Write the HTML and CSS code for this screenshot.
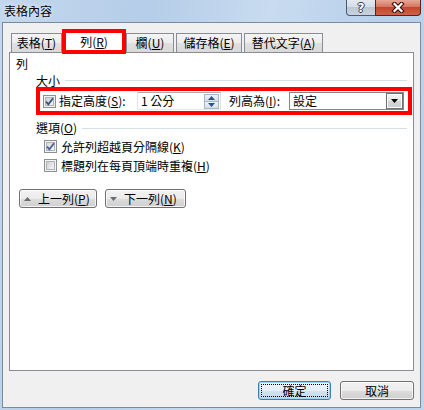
FILE: index.html
```html
<!DOCTYPE html>
<html lang="zh-Hant">
<head>
<meta charset="utf-8">
<title>表格內容</title>
<link rel="stylesheet" href="styles.css">
</head>
<body>
<div class="window">
  <div class="titlebar">
    <span class="title">表格內容</span>
    <div class="caption-btns">
      <span class="cbtn help">?</span>
      <span class="cbtn close"><svg width="14" height="11" viewBox="0 0 14 11"><path d="M3.5 2 L10.5 9 M10.5 2 L3.5 9" stroke="#3d1209" stroke-width="4.4" stroke-linecap="square" fill="none"/><path d="M3.5 2 L10.5 9 M10.5 2 L3.5 9" stroke="#fff" stroke-width="2.2" stroke-linecap="square" fill="none"/></svg></span>
    </div>
  </div>
  <div class="client">
    <div class="tabs">
      <span class="tab t1">表格(<u>T</u>)</span>
      <span class="tab sel">列(<u>R</u>)</span>
      <span class="tab t3">欄(<u>U</u>)</span>
      <span class="tab t4">儲存格(<u>E</u>)</span>
      <span class="tab t5">替代文字(<u>A</u>)</span>
    </div>
    <div class="panel">
      <div class="section-title">列</div>
      <div class="group-head size-head"><span>大小</span><span class="rule"></span></div>
      <div class="size-row">
        <span class="cb checked"><span class="cb-in"><svg width="9" height="9" viewBox="0 0 9 9"><path d="M1 4.6 L3.4 7.4 L8 1.2" stroke="#3b4f86" stroke-width="1.8" fill="none"/></svg></span></span>
        <span class="lbl lbl-height">指定高度(<u>S</u>):</span>
        <span class="spin">
          <span class="spin-text">1 公分</span>
          <span class="spin-btns">
            <span class="spin-b up"><svg width="7" height="4" viewBox="0 0 7 4"><path d="M0 4 L3.5 0 L7 4Z" fill="#2f4f8f"/></svg></span>
            <span class="spin-b down"><svg width="7" height="4" viewBox="0 0 7 4"><path d="M0 0 L3.5 4 L7 0Z" fill="#2f4f8f"/></svg></span>
          </span>
        </span>
        <span class="lbl lbl-rule">列高為(<u>I</u>):</span>
        <span class="combo">
          <span class="combo-text">設定</span>
          <span class="combo-btn"><svg width="7" height="4" viewBox="0 0 7 4"><path d="M0 0 L3.5 4 L7 0Z" fill="#000"/></svg></span>
        </span>
      </div>
      <div class="group-head opt-head"><span>選項(<u>O</u>)</span><span class="rule"></span></div>
      <div class="opt-row">
        <span class="cb checked soft"><span class="cb-in"><svg width="9" height="9" viewBox="0 0 9 9"><path d="M1 4.6 L3.4 7.4 L8 1.2" stroke="#4a5f97" stroke-width="1.8" fill="none"/></svg></span></span>
        <span class="opt-lbl">允許列超越頁分隔線(<u>K</u>)</span>
      </div>
      <div class="opt-row">
        <span class="cb"><span class="cb-in"></span></span>
        <span class="opt-lbl">標題列在每頁頂端時重複(<u>H</u>)</span>
      </div>
      <div class="nav-row">
        <span class="btn nav prev"><svg width="7" height="4" viewBox="0 0 7 4"><path d="M0 4 L3.5 0 L7 4Z" fill="#6b6b6b"/></svg><span>上一列(<u>P</u>)</span></span>
        <span class="btn nav next"><svg width="7" height="4" viewBox="0 0 7 4"><path d="M0 0 L3.5 4 L7 0Z" fill="#6b6b6b"/></svg><span>下一列(<u>N</u>)</span></span>
      </div>
    </div>
    <div class="footer">
      <span class="btn default ok"><span class="focus">確定</span></span>
      <span class="btn cancel">取消</span>
    </div>
  </div>
</div>
</body>
</html>
```
FILE: styles.css
```css
*, *::before, *::after { box-sizing: border-box; }
html, body { margin: 0; padding: 0; }
body {
  width: 424px;
  height: 410px;
  overflow: hidden;
  font-family: "Noto Sans CJK TC", "Noto Sans CJK SC", sans-serif;
  font-size: 12px;
  color: #000;
}
u { text-decoration: underline; text-underline-offset: 1px; }

.window {
  width: 424px;
  height: 410px;
  display: flex;
  flex-direction: column;
  background: linear-gradient(100deg, #c3d7ee 0%, #b5cde8 30%, #c8dbf0 55%, #b7cfe9 80%, #c0d5ec 100%);
}

/* title bar */
.titlebar {
  height: 22px;
  flex: none;
  display: flex;
  justify-content: space-between;
  align-items: flex-start;
}
.title {
  padding-left: 4px;
  line-height: 22px;
  text-shadow: 0 0 5px rgba(255,255,255,0.9);
}
.caption-btns { display: flex; margin-right: 3px; }
.cbtn {
  height: 16px;
  display: flex;
  align-items: center;
  justify-content: center;
  border: 1px solid #4c5b70;
  border-top: none;
}
.cbtn.help {
  width: 29px;
  border-right: none;
  border-bottom-left-radius: 4px;
  background: linear-gradient(#e4eaf2, #d2dae5 50%, #bcc7d6 50%, #c9d3e0);
  color: #fff;
  font-family: "DejaVu Sans", sans-serif;
  font-weight: bold;
  font-size: 12px;
  line-height: 14px;
  text-shadow: 1px 0 #2c3a4d, -1px 0 #2c3a4d, 0 1px #2c3a4d, 0 -1px #2c3a4d;
}
.cbtn.close {
  width: 46px;
  border-color: #5a2319;
  border-bottom-right-radius: 4px;
  background: linear-gradient(#e8a898, #d67660 45%, #c3462e 50%, #cf6248);
}

/* client */
.client {
  flex: none;
  height: 386px;
  margin: 0 3px 0 2px;
  background: #f0f0f0;
  border: 1px solid #7d8a9c;
  display: flex;
  flex-direction: column;
}

/* tabs */
.tabs {
  height: 29px;
  flex: none;
  display: flex;
  align-items: flex-end;
  padding-left: 8px;
  position: relative;
  z-index: 1;
}
.tab {
  height: 19px;
  border: 1px solid #898c95;
  border-bottom: none;
  background: linear-gradient(#f4f4f4, #ececec 50%, #e0e0e0 50%, #d9d9d9);
  display: flex;
  align-items: center;
  justify-content: center;
  line-height: 16px;
  white-space: nowrap;
}
.tab.t1 { width: 51px; }
.tab.sel {
  width: 64px;
  height: 22px;
  margin-bottom: -1px;
  background: #fff;
  position: relative;
  padding-bottom: 2px;
}
.tab.sel::after {
  content: "";
  position: absolute;
  left: -1px;
  top: -3px;
  width: 64px;
  height: 25px;
  border: 4px solid #ff0000;
}
.tab.t3 { width: 48px; }
.tab.t4 { width: 66px; margin-left: 2px; }
.tab.t5 { width: 79px; margin-left: 2px; }

/* panel */
.panel {
  flex: none;
  height: 319px;
  margin: 0 6px;
  background: #fff;
  border: 1px solid #898c95;
  display: flex;
  flex-direction: column;
}
.section-title {
  margin: 3px 0 0 6px;
  height: 16px;
  line-height: 16px;
}
.group-head {
  display: flex;
  align-items: center;
  padding-left: 26px;
  margin-right: 6px;
}
.group-head .rule {
  flex: 1;
  height: 1px;
  background: #d5dfe5;
  margin-left: 5px;
}
.size-head { margin-top: 2px; height: 13px; line-height: 13px; }
.opt-head { margin-top: 6px; height: 14px; line-height: 14px; }

/* highlighted size row */
.size-row {
  height: 28px;
  margin: 0 1px 0 26px;
  border: 4px solid #ff0000;
  display: flex;
  align-items: center;
  padding-left: 3px;
}
.lbl { white-space: nowrap; line-height: 16px; }
.lbl-height { width: 81px; padding-left: 3px; }
.lbl-rule { width: 60px; margin-left: 8px; }

/* checkbox */
.cb {
  width: 13px;
  height: 13px;
  flex: none;
  border: 1px solid #8e8f8f;
  background: #f4f4f4;
  padding: 1px;
  display: flex;
}
.cb-in {
  flex: 1;
  border: 1px solid #aeb3b9;
  background: linear-gradient(135deg, #cbcfd5, #f6f6f6);
  display: flex;
  align-items: center;
  justify-content: center;
  overflow: visible;
}
.cb-in svg { flex: none; margin: -1px; }
.cb.soft .cb-in { background: linear-gradient(135deg, #d8dbe0, #f7f7f7); }

/* spinner */
.spin {
  width: 84px;
  height: 18px;
  border: 1px solid #abadb3;
  border-color: #abadb3 #dbdfe6 #e3e9ef #e2e3ea;
  background: #fff;
  display: flex;
}
.spin-text { flex: 1; padding-left: 3px; line-height: 16px; }
.spin-btns {
  width: 16px;
  display: flex;
  flex-direction: column;
  padding: 1px 1px 0 0;
}
.spin-b {
  flex: 1;
  display: flex;
  align-items: center;
  justify-content: center;
  border: 1px solid #a9b6c8;
  background: linear-gradient(#eef3fa, #d3deec);
}
.spin-b.down { border-top: none; }

/* combo */
.combo {
  width: 115px;
  height: 18px;
  border: 1px solid #828790;
  background: #fff;
  display: flex;
}
.combo-text { flex: 1; padding-left: 3px; line-height: 16px; }
.combo-btn {
  width: 17px;
  display: flex;
  align-items: center;
  justify-content: center;
  border: 1px solid #707070;
  background: linear-gradient(#f4f4f4, #e6e6e6 50%, #d8d8d8 50%, #cdcdcd);
  box-shadow: inset 0 0 0 1px #fbfbfb;
}

/* options */
.opt-row {
  height: 19px;
  display: flex;
  align-items: center;
  padding-left: 34px;
}
.opt-head + .opt-row { margin-top: 2px; }
.opt-lbl { margin-left: 4px; line-height: 16px; white-space: nowrap; }

/* buttons */
.btn {
  height: 19px;
  border: 1px solid #707070;
  border-radius: 3px;
  background: linear-gradient(#f2f2f2, #ebebeb 50%, #dddddd 50%, #cfcfcf);
  box-shadow: inset 0 0 0 1px rgba(255,255,255,0.75);
  display: flex;
  align-items: center;
  justify-content: center;
  line-height: 14px;
  white-space: nowrap;
}
.nav-row {
  display: flex;
  gap: 8px;
  margin-top: 14px;
  padding-left: 9px;
}
.btn.nav { justify-content: flex-start; padding-left: 4px; gap: 7px; }
.btn.prev { width: 78px; }
.btn.next { width: 81px; }

.footer {
  display: flex;
  justify-content: flex-end;
  gap: 9px;
  padding: 10px 6px 0 0;
}
.btn.ok {
  width: 73px;
  padding: 2px;
  border-color: #3c7fb1;
  box-shadow: inset 0 0 0 1px #9ad6f6;
  background: linear-gradient(#eef6fb, #e3eef7 50%, #d2e3f0 50%, #c6dbec);
}
.btn.cancel { width: 74px; }
.focus {
  flex: 1;
  align-self: stretch;
  border: 1px dotted #000;
  display: flex;
  align-items: center;
  justify-content: center;
}
```
